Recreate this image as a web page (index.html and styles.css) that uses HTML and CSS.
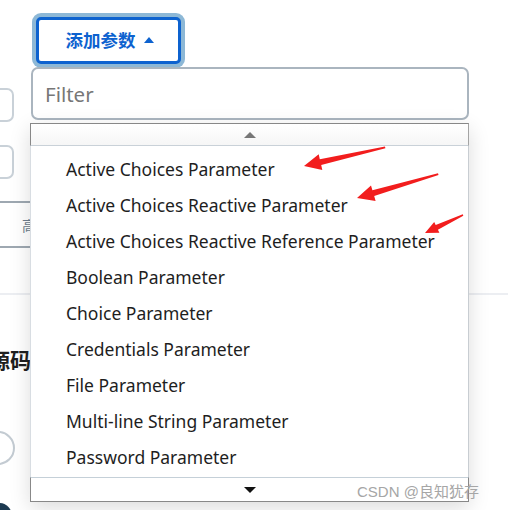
FILE: index.html
```html
<!DOCTYPE html>
<html>
<head>
<meta charset="utf-8">
<link rel="stylesheet" href="styles.css">
</head>
<body>
<div class="page">
  <div class="field"></div>
  <div class="field second"></div>
  <div class="tabs"><span class="tab">高级</span></div>
  <div class="divider"></div>
  <h2 class="heading">源码</h2>
  <div class="radio"></div>
  <div class="dot"></div>
</div>

<div class="popup">
  <button class="add-btn">添加参数 <span class="caret"></span></button>
  <div class="filter">Filter</div>
  <div class="menu">
    <div class="scroll up"><span class="tri-up"></span></div>
    <ul class="list">
      <li>Active Choices Parameter</li>
      <li>Active Choices Reactive Parameter</li>
      <li>Active Choices Reactive Reference Parameter</li>
      <li>Boolean Parameter</li>
      <li>Choice Parameter</li>
      <li>Credentials Parameter</li>
      <li>File Parameter</li>
      <li>Multi-line String Parameter</li>
      <li>Password Parameter</li>
    </ul>
    <div class="scroll down"><span class="tri-down"></span></div>
  </div>
</div>

<svg class="arrows" width="508" height="510" viewBox="0 0 508 510">
  <polygon fill="#f21d1d" points="304,166 318.7,154.3 319.8,159.2 385,146.5 385.4,148.2 321.2,165 322.3,169.9"/>
  <polygon fill="#f21d1d" points="357,198 371,185.5 372.4,190.3 438,173.3 438.5,175 374.2,196.1 375.6,200.9"/>
  <polygon fill="#f21d1d" points="425,233 434.2,222 435.7,225.1 462.8,214.3 463.3,215.8 437.9,229.7 439.4,232.8"/>
</svg>

<div class="watermark">CSDN @良知犹存</div>
</body>
</html>
```
FILE: styles.css
```css
html, body {
  margin: 0;
  padding: 0;
}
body {
  width: 508px;
  height: 510px;
  overflow: hidden;
  position: relative;
  background: #ffffff;
  font-family: "Noto Sans", "Noto Sans CJK SC", sans-serif;
}
.page {
  padding-top: 88px;
  display: flex;
  flex-direction: column;
}
.field {
  width: 40px;
  height: 30px;
  margin-left: -30px;
  border: 2px solid #c9d1d8;
  border-radius: 7px;
}
.field.second {
  margin-top: 23px;
}
.tabs {
  margin-top: 22px;
  width: 300px;
  height: 43px;
  border-top: 2px solid #9ea8b1;
  border-bottom: 2px solid #9ea8b1;
  display: flex;
  align-items: center;
  padding-left: 22px;
  box-sizing: content-box;
}
.tab {
  font-size: 14px;
  color: #6d7d8d;
}
.divider {
  margin-top: 45px;
  height: 2px;
  background: #eceef2;
}
.heading {
  margin: 50px 0 0 -11px;
  font-size: 21px;
  font-weight: 700;
  line-height: 28px;
  color: #1f1f1f;
  font-family: "Noto Sans CJK SC", sans-serif;
}
.radio {
  margin: 58px 0 0 -19px;
  width: 30px;
  height: 30px;
  border: 2px solid #c3cbd2;
  border-radius: 50%;
}
.dot {
  margin: 38px 0 0 -14px;
  width: 26px;
  height: 26px;
  border-radius: 50%;
  background: #1c3a51;
}

.popup {
  position: absolute;
  left: 30px;
  top: 17px;
  display: flex;
  flex-direction: column;
  align-items: flex-start;
}
.add-btn {
  margin-left: 6px;
  width: 145px;
  height: 47px;
  border: 3px solid #0d62cf;
  border-radius: 5px;
  background: #fff;
  box-shadow: 0 0 0 4px #8db8d6;
  color: #0d62cf;
  font-family: "Noto Sans CJK SC", sans-serif;
  font-size: 17.5px;
  font-weight: 700;
  display: flex;
  align-items: center;
  justify-content: center;
  gap: 4px;
  padding: 0 0 2px 2px;
}
.caret {
  display: inline-block;
  width: 0;
  height: 0;
  border-left: 5px solid transparent;
  border-right: 5px solid transparent;
  border-bottom: 6px solid #0d62cf;
  margin-left: 4px;
}
.filter {
  margin-top: 3px;
  margin-left: 1px;
  border: 2px solid #aab5bf;
  border-radius: 7px;
  background: #fff;
  font-size: 20.5px;
  color: #777;
  display: flex;
  align-items: center;
  padding-left: 12px;
  box-sizing: border-box;
  width: 438px;
  height: 53px;
}
.menu {
  margin-top: 3px;
  width: 439px;
  background: #fff;
  box-shadow: 0 6px 20px rgba(0, 0, 0, 0.14);
}
.scroll {
  height: 23px;
  display: flex;
  align-items: center;
  justify-content: center;
  box-sizing: border-box;
}
.scroll.up {
  border-top: 1px solid #888;
  border-left: 1px solid #888;
  border-right: 1px solid #a4a4a4;
  border-bottom: 1px solid #c9d1d8;
  background: linear-gradient(#ffffff, #f6f6f6);
}
.scroll.down {
  height: 25px;
  border-top: 1px solid #c5d0d8;
  border-left: 1px solid #888;
  border-right: 1px solid #888;
  border-bottom: 1px solid #888;
}
.tri-up {
  width: 0;
  height: 0;
  border-left: 6px solid transparent;
  border-right: 6px solid transparent;
  border-bottom: 6px solid #777;
}
.tri-down {
  width: 0;
  height: 0;
  border-left: 6px solid transparent;
  border-right: 6px solid transparent;
  border-top: 6px solid #111;
}
.list {
  list-style: none;
  margin: 0;
  padding: 5px 0 2px 0;
  border-left: 1px solid #d8dde2;
  border-right: 1px solid #c8cdd2;
}
.list li {
  height: 36px;
  line-height: 36px;
  padding-left: 35px;
  font-size: 17.5px;
  color: #1e1e1e;
  white-space: nowrap;
}
.arrows {
  position: absolute;
  left: 0;
  top: 0;
}
.watermark {
  position: absolute;
  left: 357px;
  top: 480px;
  font-size: 15px;
  color: #a6a6a6;
  font-family: "Liberation Sans", "Noto Sans CJK SC", sans-serif;
}
```
